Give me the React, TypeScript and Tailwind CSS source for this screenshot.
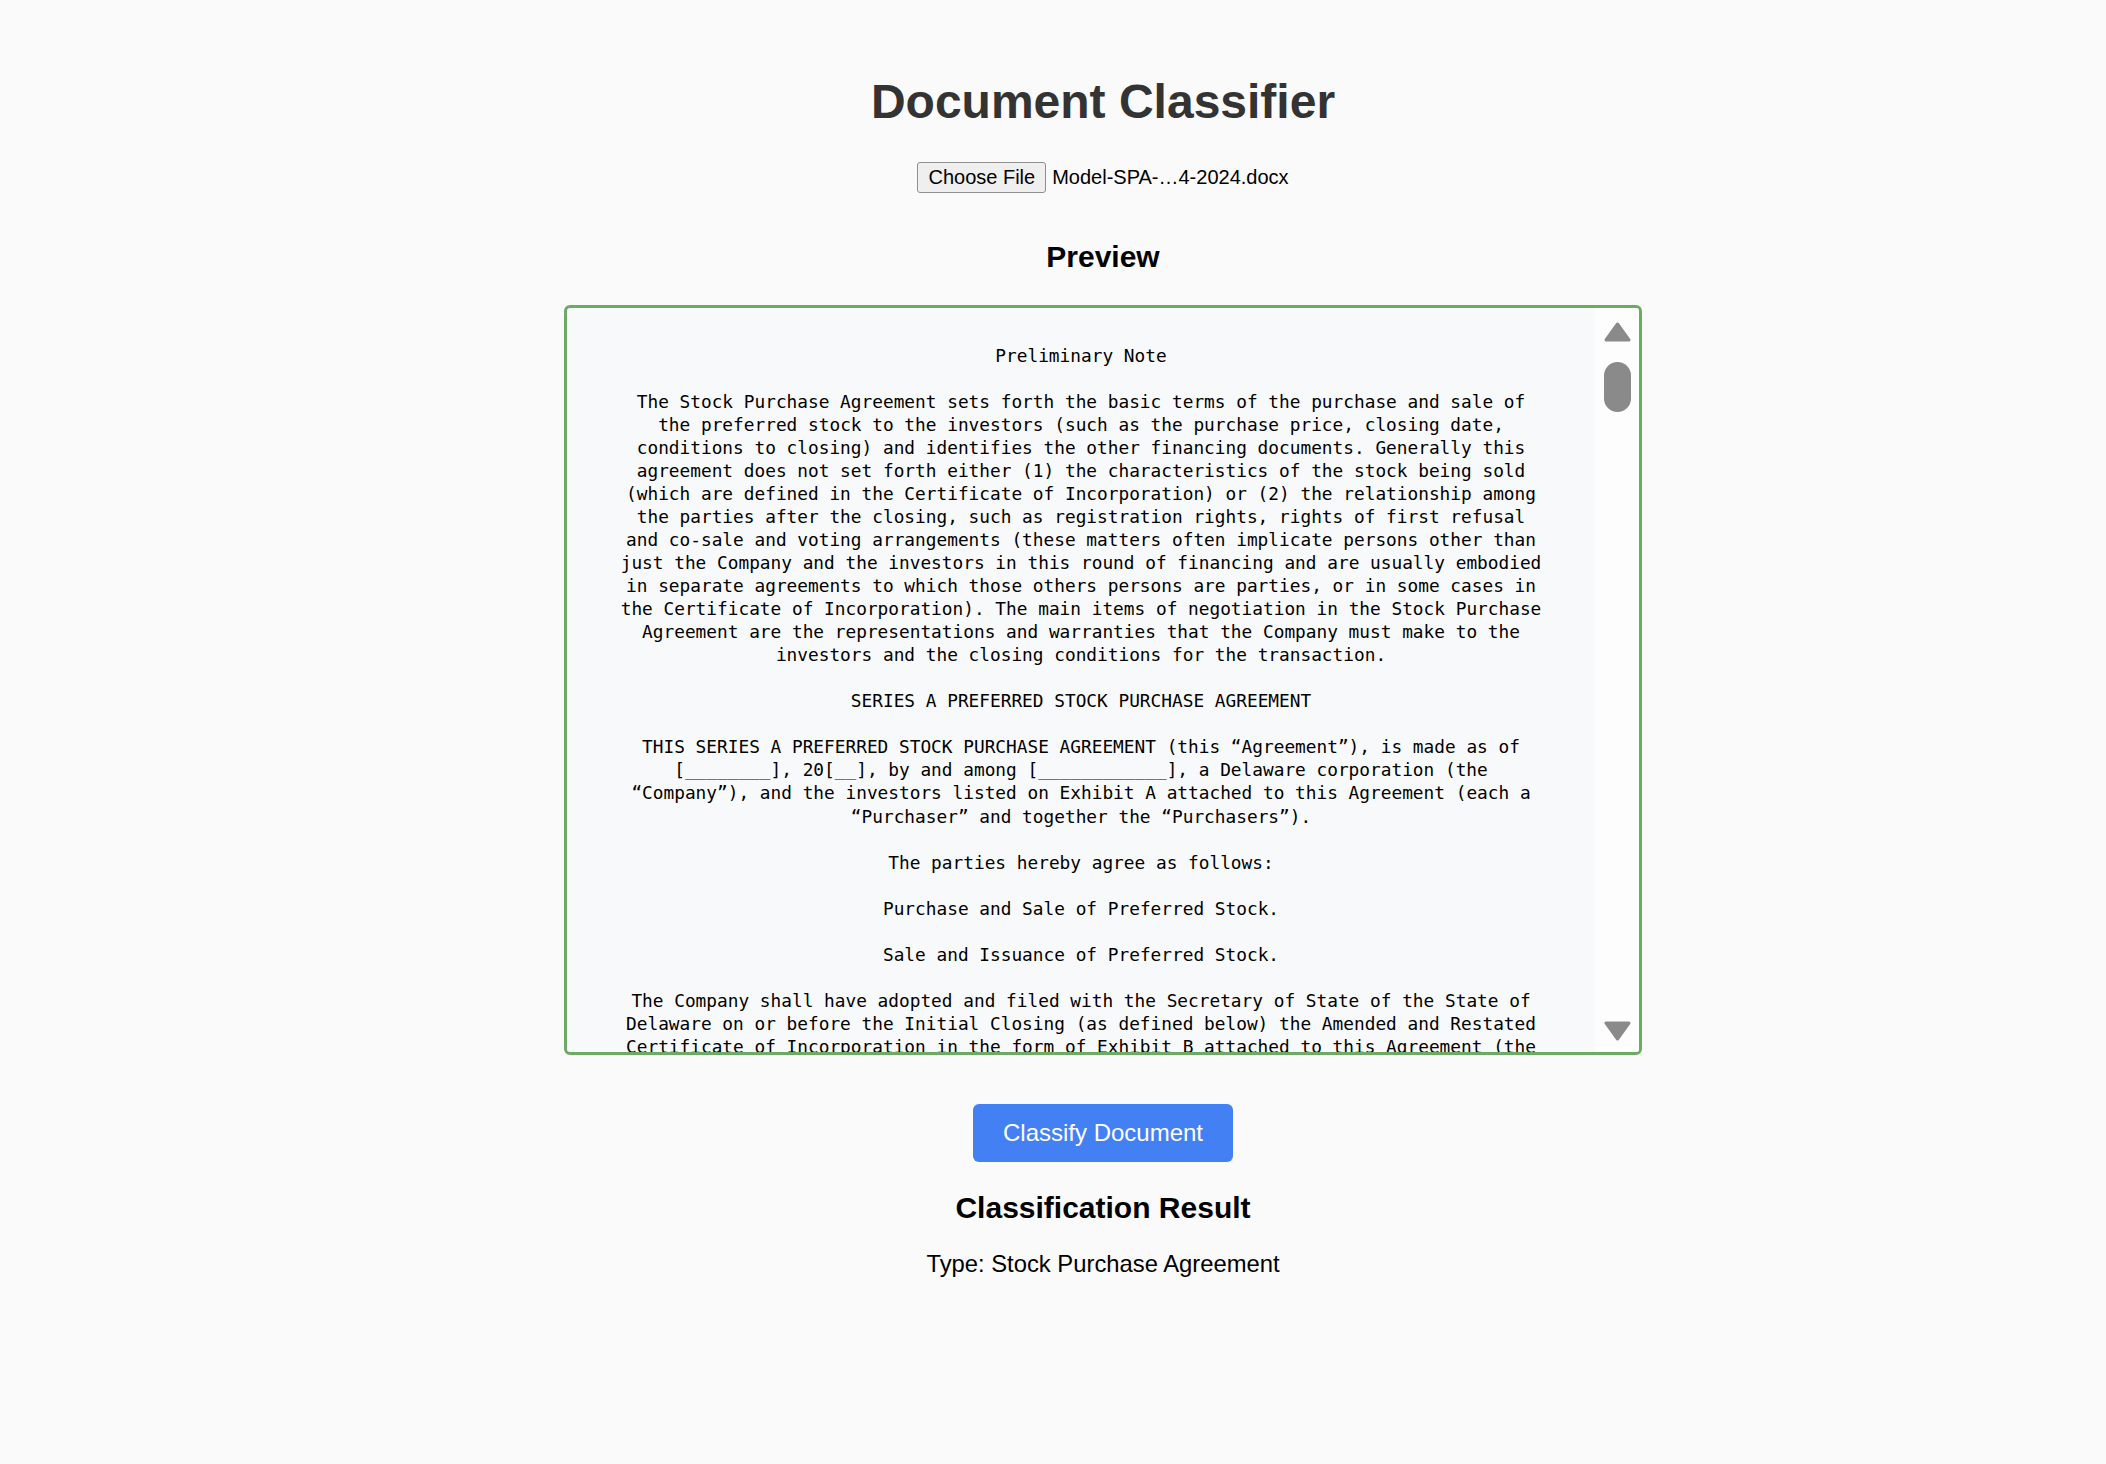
import React from 'react';

const previewLines = [
  'Preliminary Note',
  '',
  'The Stock Purchase Agreement sets forth the basic terms of the purchase and sale of',
  'the preferred stock to the investors (such as the purchase price, closing date,',
  'conditions to closing) and identifies the other financing documents. Generally this',
  'agreement does not set forth either (1) the characteristics of the stock being sold',
  '(which are defined in the Certificate of Incorporation) or (2) the relationship among',
  'the parties after the closing, such as registration rights, rights of first refusal',
  'and co-sale and voting arrangements (these matters often implicate persons other than',
  'just the Company and the investors in this round of financing and are usually embodied',
  'in separate agreements to which those others persons are parties, or in some cases in',
  'the Certificate of Incorporation). The main items of negotiation in the Stock Purchase',
  'Agreement are the representations and warranties that the Company must make to the',
  'investors and the closing conditions for the transaction.',
  '',
  'SERIES A PREFERRED STOCK PURCHASE AGREEMENT',
  '',
  'THIS SERIES A PREFERRED STOCK PURCHASE AGREEMENT (this “Agreement”), is made as of',
  '[________], 20[__], by and among [____________], a Delaware corporation (the',
  '“Company”), and the investors listed on Exhibit A attached to this Agreement (each a',
  '“Purchaser” and together the “Purchasers”).',
  '',
  'The parties hereby agree as follows:',
  '',
  'Purchase and Sale of Preferred Stock.',
  '',
  'Sale and Issuance of Preferred Stock.',
  '',
  'The Company shall have adopted and filed with the Secretary of State of the State of',
  'Delaware on or before the Initial Closing (as defined below) the Amended and Restated',
  'Certificate of Incorporation in the form of Exhibit B attached to this Agreement (the',
  '“Restated Certificate”).',
];

function Arrow({ down = false }: { down?: boolean }) {
  return (
    <svg width="27" height="20" viewBox="0 0 27 20" className={down ? 'rotate-180' : ''}>
      <path
        d="M13.5 2 L25 18 L2 18 Z"
        fill="#8a8a8a"
        stroke="#8a8a8a"
        strokeWidth="3"
        strokeLinejoin="round"
      />
    </svg>
  );
}

function Scrollbar() {
  return (
    <div className="w-[44px] shrink-0 bg-[#fdfdfd] flex flex-col items-center pt-[14px] pb-[11px]">
      <Arrow />
      <div className="mt-[20px] w-[27px] h-[50px] rounded-full bg-[#8a8a8a]" />
      <div className="flex-1" />
      <Arrow down />
    </div>
  );
}

export default function App() {
  return (
    <div className="min-h-screen bg-[#fafafa] pl-[100px] pt-[78px] flex flex-col items-center font-['Liberation_Sans',Arial,sans-serif] text-black">
      <h1 className="text-[48px] leading-[48px] font-bold text-[#333]">Document Classifier</h1>

      <div className="mt-[36px] flex items-center gap-[6px] h-[31px]">
        <button className="h-[31px] px-[10px] text-[20px] leading-[23px] bg-[#efefef] border border-[#8f8f8f] rounded-[3px] text-black">
          Choose File
        </button>
        <span className="text-[20px] leading-[23px]">Model-SPA-…4-2024.docx</span>
      </div>

      <h2 className="mt-[49px] text-[30px] leading-[30px] font-bold">Preview</h2>

      <div className="mt-[33px] w-[1078px] h-[750px] border-[3px] border-[#6cab62] rounded-[6px] bg-[#f8f9fa] flex overflow-hidden">
        <div className="flex-1 overflow-hidden pt-[35.6px]">
          <pre className="font-['DejaVu_Sans_Mono',monospace] text-[17.8px] leading-[23.05px] text-center whitespace-pre text-black">
            {previewLines.join('\n')}
          </pre>
        </div>
        <Scrollbar />
      </div>

      <button className="mt-[49px] px-[30px] py-[15px] text-[24px] leading-[28px] text-white bg-[#4380f3] rounded-[6px]">
        Classify Document
      </button>

      <h2 className="mt-[31px] text-[30px] leading-[30px] font-bold">Classification Result</h2>

      <p className="mt-[29px] text-[23.8px] leading-[24px]">Type: Stock Purchase Agreement</p>
    </div>
  );
}
